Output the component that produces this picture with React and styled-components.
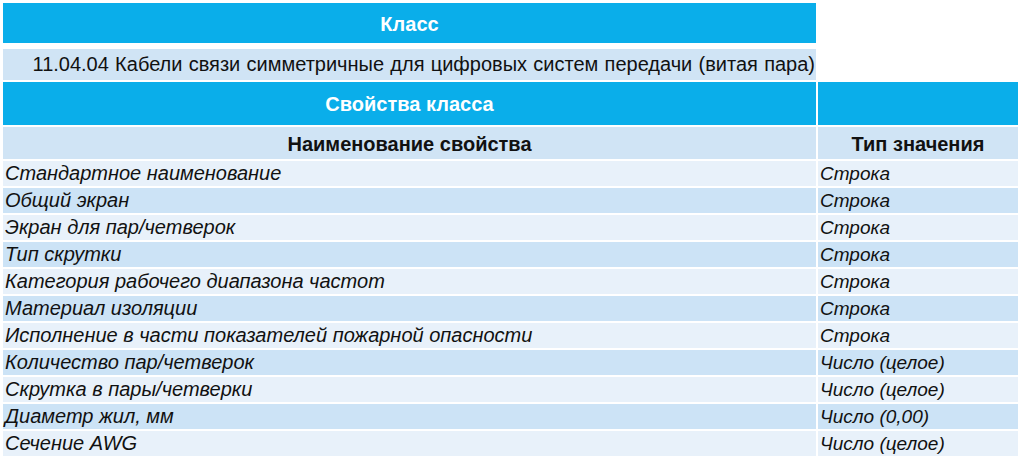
import React from 'react';
import styled, { createGlobalStyle } from 'styled-components';

const GlobalStyle = createGlobalStyle`
  body {
    margin: 0;
    background: #ffffff;
    font-family: "Liberation Sans", Arial, sans-serif;
  }
`;

const BLUE = '#0aaeea';
const LIGHT = '#e8f1fa';
const DARK = '#cce3f6';
const HEAD = '#d0e4f5';

const Page = styled.div`
  width: 1024px;
  height: 468px;
  padding: 3px 0 0 3px;
  box-sizing: border-box;
`;

const ClassBlock = styled.div`
  width: 813px;
  display: flex;
  flex-direction: column;
`;

const BlueBar = styled.div`
  background: ${BLUE};
  color: #ffffff;
  font-weight: bold;
  font-size: 20px;
  display: flex;
  align-items: center;
  justify-content: center;
  padding-top: 2px;
  box-sizing: border-box;
  height: ${p => p.$h}px;
`;

const CodeRow = styled.div`
  margin-top: 6px;
  height: 31px;
  background: ${HEAD};
  color: #111111;
  font-size: 20px;
  word-spacing: 0.7px;
  display: flex;
  align-items: center;
  justify-content: flex-end;
  padding-right: 1px;
  white-space: nowrap;
`;

const Table = styled.div`
  margin-top: 2px;
  display: grid;
  grid-template-columns: 813px 200px;
  grid-template-rows: 43px 32px;
  grid-auto-rows: 25px;
  gap: 2px;
`;

const TopCell = styled(BlueBar)`
  height: auto;
`;

const HeadCell = styled.div`
  background: ${HEAD};
  color: #111111;
  font-weight: bold;
  font-size: 20px;
  display: flex;
  align-items: center;
  justify-content: center;
  padding-top: 3px;
`;

const Cell = styled.div`
  background: ${p => (p.$odd ? DARK : LIGHT)};
  color: #111111;
  font-style: italic;
  font-size: ${p => (p.$type ? 19 : 20)}px;
  display: flex;
  align-items: center;
  padding-left: 2px;
  white-space: nowrap;
`;

const rows = [
  ['Стандартное наименование', 'Строка'],
  ['Общий экран', 'Строка'],
  ['Экран для пар/четверок', 'Строка'],
  ['Тип скрутки', 'Строка'],
  ['Категория рабочего диапазона частот', 'Строка'],
  ['Материал изоляции', 'Строка'],
  ['Исполнение в части показателей пожарной опасности', 'Строка'],
  ['Количество пар/четверок', 'Число (целое)'],
  ['Скрутка в пары/четверки', 'Число (целое)'],
  ['Диаметр жил, мм', 'Число (0,00)'],
  ['Сечение AWG', 'Число (целое)'],
];

export default function App() {
  return (
    <>
      <GlobalStyle />
      <Page>
        <ClassBlock>
          <BlueBar $h={40}>Класс</BlueBar>
          <CodeRow>11.04.04 Кабели связи симметричные для цифровых систем передачи (витая пара)</CodeRow>
        </ClassBlock>
        <Table>
          <TopCell>Свойства класса</TopCell>
          <TopCell />
          <HeadCell>Наименование свойства</HeadCell>
          <HeadCell>Тип значения</HeadCell>
          {rows.map(([name, type], i) => (
            <React.Fragment key={name}>
              <Cell $odd={i % 2 === 1}>{name}</Cell>
              <Cell $odd={i % 2 === 1} $type>{type}</Cell>
            </React.Fragment>
          ))}
        </Table>
      </Page>
    </>
  );
}
